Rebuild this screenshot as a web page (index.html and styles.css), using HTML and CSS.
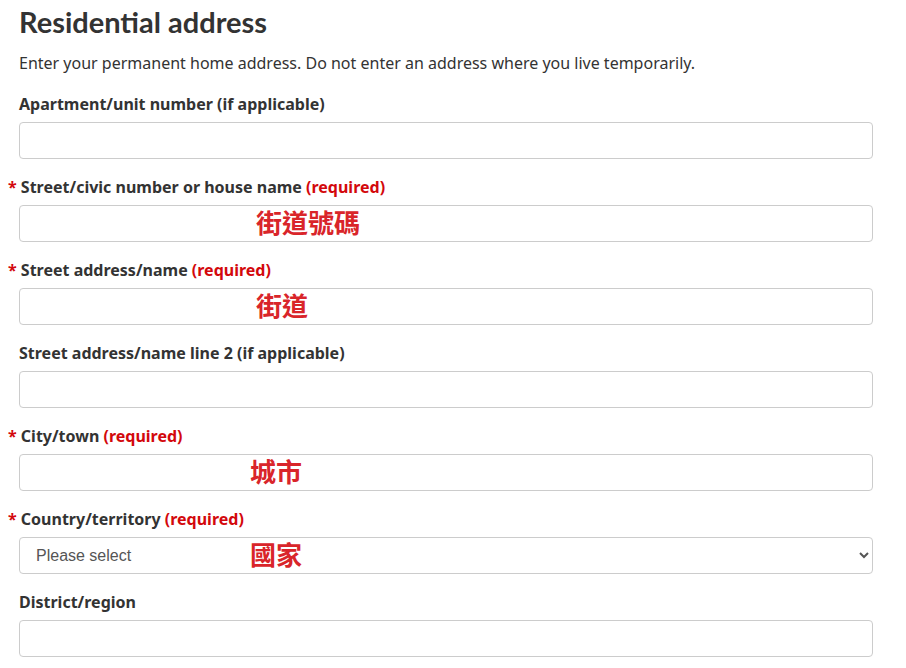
FILE: index.html
```html
<!DOCTYPE html>
<html lang="en">
<head>
<meta charset="utf-8">
<title>Residential address</title>
<link rel="stylesheet" href="styles.css">
</head>
<body>
<main class="page">
  <h1 class="title">Residential address</h1>
  <p class="intro">Enter your permanent home address. Do not enter an address where you live temporarily.</p>

  <div class="field">
    <label class="label">Apartment/unit number (if applicable)</label>
    <div class="control"><input class="input" type="text"></div>
  </div>

  <div class="field">
    <label class="label required"><span class="star">*</span> Street/civic number or house name <strong class="req">(required)</strong></label>
    <div class="control"><input class="input" type="text"><span class="note note-a">街道號碼</span></div>
  </div>

  <div class="field">
    <label class="label required"><span class="star">*</span> Street address/name <strong class="req">(required)</strong></label>
    <div class="control"><input class="input" type="text"><span class="note note-a">街道</span></div>
  </div>

  <div class="field">
    <label class="label">Street address/name line 2 (if applicable)</label>
    <div class="control"><input class="input" type="text"></div>
  </div>

  <div class="field">
    <label class="label required"><span class="star">*</span> City/town <strong class="req">(required)</strong></label>
    <div class="control"><input class="input" type="text"><span class="note note-b">城市</span></div>
  </div>

  <div class="field">
    <label class="label required"><span class="star">*</span> Country/territory <strong class="req">(required)</strong></label>
    <div class="control"><select class="input select"><option>Please select</option></select><span class="note note-b">國家</span></div>
  </div>

  <div class="field">
    <label class="label">District/region</label>
    <div class="control"><input class="input" type="text"></div>
  </div>
</main>
</body>
</html>
```
FILE: styles.css
```css
html, body {
  margin: 0;
  padding: 0;
  background: #fff;
}
body {
  font-family: "Noto Sans", "Open Sans", sans-serif;
  color: #333;
}
.page {
  padding: 5px 33px 0 19px;
}
.title {
  font-family: Lato, "Noto Sans", sans-serif;
  font-weight: 700;
  font-size: 29px;
  line-height: 34px;
  margin: 0 0 13px;
  color: #333;
}
.intro {
  font-size: 16px;
  line-height: 22px;
  margin: 0 0 19px;
}
.field {
  margin-bottom: 17px;
}
.label {
  display: block;
  font-weight: 700;
  font-size: 16px;
  line-height: 22px;
  margin-bottom: 7px;
}
.required {
  margin-left: -11px;
}
.star, .req {
  color: #d3080c;
  font-weight: 700;
}
.control {
  position: relative;
}
.input {
  display: block;
  box-sizing: border-box;
  width: 100%;
  height: 37px;
  border: 1px solid #ccc;
  border-radius: 4px;
  background: #fff;
  font-family: "Liberation Sans", Arial, sans-serif;
  font-size: 16px;
  padding: 0 12px;
  color: #555;
}
.select {
  padding-left: 12px;
}
.note {
  position: absolute;
  top: 50%;
  transform: translateY(-58%);
  font-family: "Noto Sans CJK TC", "Noto Sans CJK SC", sans-serif;
  font-weight: 700;
  font-size: 26px;
  line-height: 1;
  color: #d9252a;
  pointer-events: none;
}
.note-a { left: 237px; }
.note-b { left: 231px; }
```
